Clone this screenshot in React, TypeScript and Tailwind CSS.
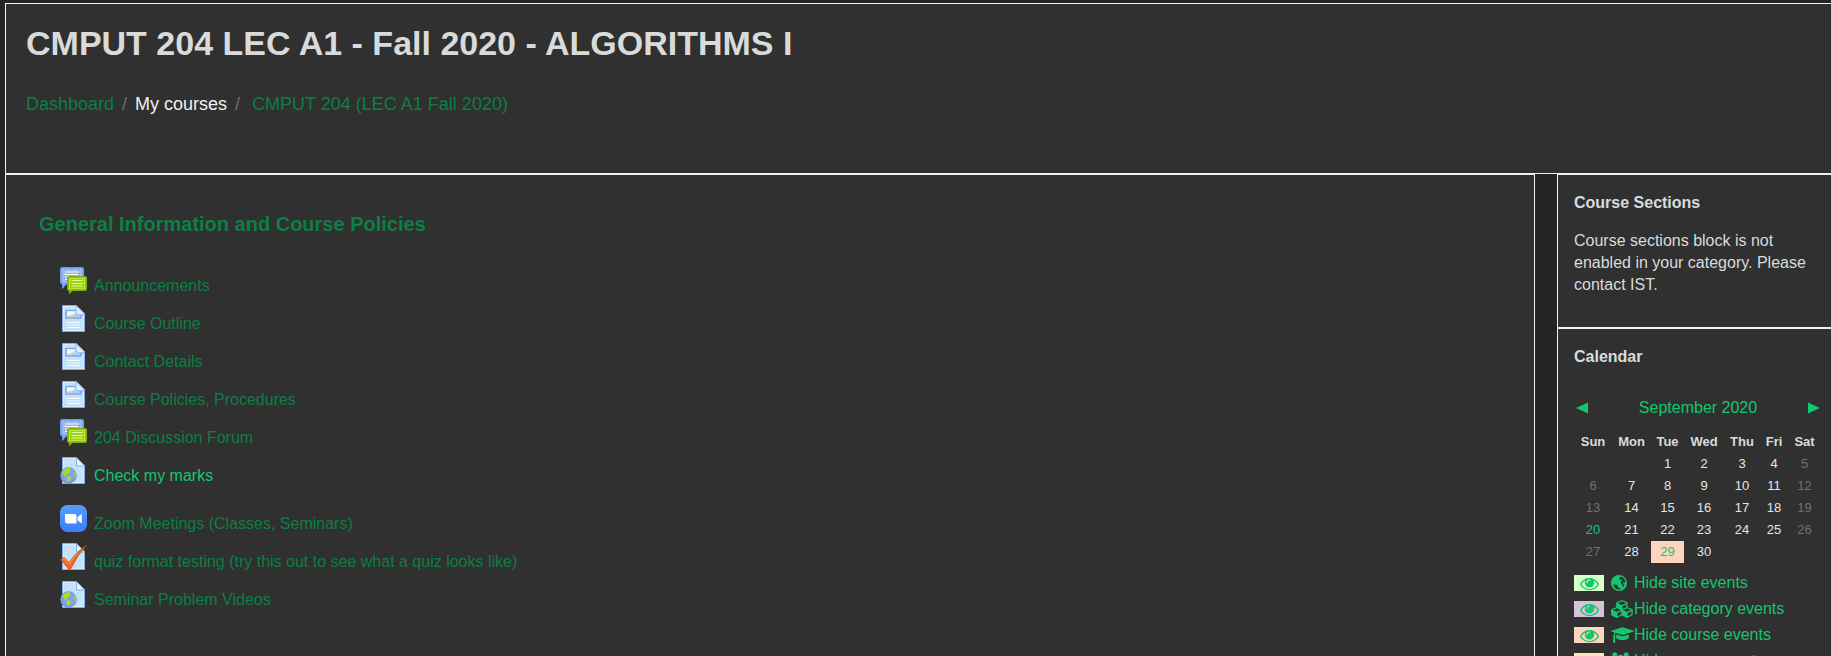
import React from "react";

type IconProps = { className?: string };

const EYE =
  "M1664 960q-152-236-381-353 61 104 61 225 0 185-131.5 316.5t-316.5 131.5-316.5-131.5-131.5-316.5q0-121 61-225-229 117-381 353 133 205 333.5 326.5t434.5 121.5 434.5-121.5 333.5-326.5zm-720-384q0-20-14-34t-34-14q-125 0-214.5 89.5t-89.5 214.5q0 20 14 34t34 14 34-14 14-34q0-86 61-147t147-61q20 0 34-14t14-34zm848 384q0 34-20 69-140 230-376.5 368.5t-499.5 138.5-499.5-139-376.5-368q-20-35-20-69t20-69q140-229 376.5-368t499.5-139 499.5 139 376.5 368q20 35 20 69z";
const CUBES =
  "M640 1632l384-192v-314l-384 164v342zm-64-454l404-173-404-173-404 173zm1088 454l384-192v-314l-384 164v342zm-64-454l404-173-404-173-404 173zm-448-293l384-165v-266l-384 164v267zm-64-379l441-189-441-189-441 189zm1088 518v416q0 36-19 67t-52 47l-448 224q-25 14-57 14t-57-14l-448-224q-5-2-7-4-2 2-7 4l-448 224q-25 14-57 14t-57-14l-448-224q-33-16-52-47t-19-67v-416q0-38 21.5-70t56.5-48l434-186v-400q0-38 21.5-70t56.5-48l448-192q23-10 50-10t50 10l448 192q35 16 56.5 48t21.5 70v400l434 186q36 16 57 48t21 70z";
const CAP =
  "M1774 836l18 316q4 69-82 128t-235 93.5-323 34.5-323-34.5-235-93.5-82-128l18-316 574 181q22 7 48 7t48-7zm530-324q0 23-22 31l-1120 352q-4 1-10 1t-10-1l-652-206q-43 34-71 111.5t-34 178.5q63 36 63 109 0 69-58 107l58 433q2 14-8 25-9 11-24 11h-192q-15 0-24-11-10-11-8-25l58-433q-58-38-58-107 0-73 65-111 11-207 98-330l-333-104q-22-8-22-31t22-31l1120-352q4-1 10-1t10 1l1120 352q22 8 22 31z";
const GROUP =
  "M593 896q-162 5-265 128h-134q-82 0-138-40.5t-56-118.5q0-353 124-353 6 0 43.5 21t97.5 42.5 119 21.5q67 0 133-23-5 37-5 66 0 159 81 287zm1071 637q0 120-73 189.5t-194 69.5h-874q-121 0-194-69.5t-73-189.5q0-53 3.5-103.5t14-109 26.5-108.5 43-97.5 62-81 85.5-53.5 111.5-20q10 0 43 21.5t73 48 107 48 135 21.5 135-21.5 107-48 73-48 43-21.5q61 0 111.5 20t85.5 53.5 62 81 43 97.5 26.5 108.5 14 109 3.5 103.5zm-1024-1277q0 106-75 181t-181 75-181-75-75-181 75-181 181-75 181 75 75 181zm704 384q0 159-112.5 271.5t-271.5 112.5-271.5-112.5-112.5-271.5 112.5-271.5 271.5-112.5 271.5 112.5 112.5 271.5zm576 225q0 78-56 118.5t-138 40.5h-134q-103-123-265-128 81-128 81-287 0-29-5-66 66 23 133 23 59 0 119-21.5t97.5-42.5 43.5-21q124 0 124 353zm-128-609q0 106-75 181t-181 75-181-75-75-181 75-181 181-75 181 75 75 181z";

function EyeIcon() {
  return (
    <svg viewBox="0 0 1792 1792" className="size-[19px]" fill="currentColor" aria-hidden="true">
      <path d={EYE} />
    </svg>
  );
}

function GlobeIcon() {
  return (
    <svg viewBox="0 0 16 16" className="size-4" aria-hidden="true">
      <circle cx="8" cy="8" r="8" fill="currentColor" />
      <path d="M8.600 2 10.200 1.700 12 2.700 13.600 4.200 14.500 6.500 14.400 8 13.200 7.200 12 8 12.300 9.500 13.300 10 12.500 11.800 11.600 12 11.400 10.200 10.200 8.800 9.800 7 10.500 5.800 11.700 5.400 11 4.600 9.600 5 8.400 3.700z" fill="#303030" />
      <path d="M2.200 8.800 4 9.800 5.800 10 7 11 6.800 12 8 12.900 9.600 12.900 10 13.900 8.300 14.500 5.500 14 3.400 12.300z" fill="#303030" />
    </svg>
  );
}

function WideIcon({ d, viewBox, className }: { d: string; viewBox: string; className: string }) {
  return (
    <svg viewBox={viewBox} className={className} fill="currentColor" aria-hidden="true">
      <path d={d} />
    </svg>
  );
}

function ForumIcon({ className }: IconProps) {
  return (
    <svg viewBox="0 0 27 27" className={className} aria-hidden="true">
      <path d="M2 .5h20q1.500 0 1.500 1.500v14q0 1-1.500 1H6l-3.500 4.500V17Q.5 17 .5 15.500V2Q.5.5 2 .5z" fill="#80a8ee" stroke="#7099e4" />
      <rect x="3" y="3" width="18" height="11.500" fill="#8fb3f2" stroke="#a9c6f8" />
      <path d="M5 5h14M4 7.500h14M5 10h8M5 12.500h3" stroke="#fff" strokeWidth="1.100" />
      <path d="M8.500 9.500h16.500q1.500 0 1.500 1.500v11q0 1.500-1.500 1.500H12l-2.500 3V23.500H8.500Q7.500 23.500 7.500 22V11q0-1.500 1-1.500z" fill="#8fc400" stroke="#7fae08" />
      <rect x="9.500" y="11.500" width="15" height="10" fill="#9ed312" stroke="#b9e63a" />
      <path d="M11.500 13.500h11M11.500 16.500h11M11.500 19h11" stroke="#e6fab0" strokeWidth="1.100" />
    </svg>
  );
}

function Sheet() {
  return (
    <>
      <path d="M2.500.5h14l8 8v18h-22z" fill="#c4e2f9" stroke="#86a9e8" />
      <path d="M3.500 1.500h12.500v7.500h7.500v16.500h-20z" fill="none" stroke="#ddeefc" strokeWidth=".8" />
      <path d="M16.500.5v8.500h8z" fill="#e9f4ff" stroke="#86a9e8" />
    </>
  );
}

function PageIcon({ className }: IconProps) {
  return (
    <svg viewBox="0 0 27 27" className={className} aria-hidden="true">
      <Sheet />
      <rect x="6" y="5.500" width="15" height="7.500" fill="#a9d4fa" stroke="#7ba3e2" strokeWidth="1.400" />
      <path d="M7 6.300h9l-2.500 3.200L7 11z" fill="#effaff" />
      <path d="M7 12.200V11l4-.5 2 1.700z" fill="#f1cf98" />
      <path d="M16 .8v7l2 2h6V8.500z" fill="#e3effd" stroke="#86a9e8" strokeWidth=".8" />
      <path d="M7 17.500h13M7 20h13M7 22.500h13" stroke="#fff" strokeWidth="1.200" />
      <path d="M7 18.700h13M7 21.200h13" stroke="#b4d6f5" strokeWidth=".6" />
    </svg>
  );
}

function LinkIcon({ className }: IconProps) {
  return (
    <svg viewBox="0 0 27 27" className={className} aria-hidden="true">
      <Sheet />
      <circle cx="8.500" cy="18.500" r="8.300" fill="#6f97dc" />
      <circle cx="9" cy="18.200" r="6.800" fill="#80a6e8" />
      <path d="M2 15.500 4.500 12.500 8 11l3 .8-1.500 1.700 1.300 1-2.300 1.500-1.500 1.700-1.500-.2 1 1.500-1.500.2-1.500-2z" fill="#aedc20" />
      <path d="M7 19.300 10.500 20l.8 1.500-1.800 1.700-1.200 2.300-1.300-2z" fill="#aedc20" />
      <path d="M14.500 14.500l1.300 2.500v3l-1.300-1-.6-2.500z" fill="#aedc20" />
    </svg>
  );
}

function QuizIcon({ className }: IconProps) {
  return (
    <svg viewBox="0 0 27 27" className={className} overflow="visible" aria-hidden="true">
      <Sheet />
      <path d="M.8 16.500 4 14.500 9.300 19.500Q15.500 9.500 26 2.700 17.500 12 10.800 25.800L8.800 26.300z" fill="#ee6a1e" stroke="#c9500f" strokeWidth=".8" />
      <path d="M3 16.500 4.200 15.700 9.300 21Q13 15 18 10" fill="none" stroke="#ffa160" strokeWidth=".9" />
    </svg>
  );
}

function ZoomIcon({ className }: IconProps) {
  return (
    <svg viewBox="0 0 27 27" className={className} aria-hidden="true">
      <defs>
        <linearGradient id="zoomBlue" x1="0" y1="0" x2="0" y2="1">
          <stop offset="0" stopColor="#549dff" />
          <stop offset="1" stopColor="#3a7ff8" />
        </linearGradient>
      </defs>
      <rect width="27" height="27" rx="7.500" fill="url(#zoomBlue)" />
      <path d="M5 9h9.500q2 0 2 2v7.500H7.500Q5 18.500 5 16zM17.500 12l4.300-3.300v9.800L17.500 15.500z" fill="#fff" />
    </svg>
  );
}

const activities = [
  [
    { label: "Announcements", Icon: ForumIcon },
    { label: "Course Outline", Icon: PageIcon },
    { label: "Contact Details", Icon: PageIcon },
    { label: "Course Policies, Procedures", Icon: PageIcon },
    { label: "204 Discussion Forum", Icon: ForumIcon },
    { label: "Check my marks", Icon: LinkIcon, bright: true },
  ],
  [
    { label: "Zoom Meetings (Classes, Seminars)", Icon: ZoomIcon },
    { label: "quiz format testing (try this out to see what a quiz looks like)", Icon: QuizIcon },
    { label: "Seminar Problem Videos", Icon: LinkIcon },
  ],
];

const weekdays = [
  { name: "Sun", width: "w-[38px]" },
  { name: "Mon", width: "w-[39px]" },
  { name: "Tue", width: "w-[33px]" },
  { name: "Wed", width: "w-[40px]" },
  { name: "Thu", width: "w-[36px]" },
  { name: "Fri", width: "w-[28px]" },
  { name: "Sat", width: "w-[33px]" },
];

const weeks: (number | null)[][] = [
  [null, null, 1, 2, 3, 4, 5],
  [6, 7, 8, 9, 10, 11, 12],
  [13, 14, 15, 16, 17, 18, 19],
  [20, 21, 22, 23, 24, 25, 26],
  [27, 28, 29, 30, null, null, null],
];

function dayClass(day: number | null, column: number) {
  if (day === 29) return "bg-[#ffd3bd] p-0 text-[#11c76f]";
  if (day === 20) return "p-0 text-[#11c76f]";
  return column === 0 || column === 6 ? "p-0 text-[#6a7076]" : "p-0 text-[#e6e6e6]";
}

const filters = [
  { label: "Hide site events", swatch: "bg-[#d8ffc9]", icon: <GlobeIcon /> },
  {
    label: "Hide category events",
    swatch: "bg-[#dac0da]",
    icon: <WideIcon d={CUBES} viewBox="0 0 2304 1792" className="h-[18px] w-[23px]" />,
  },
  {
    label: "Hide course events",
    swatch: "bg-[#ffd3bd]",
    icon: <WideIcon d={CAP} viewBox="0 0 2304 1792" className="h-[18px] w-[23px]" />,
  },
  {
    label: "Hide group events",
    swatch: "bg-[#fee7ae]",
    icon: <WideIcon d={GROUP} viewBox="0 0 1920 1792" className="h-[18px] w-[19px]" />,
  },
];

export default function App() {
  return (
    <div className="flex h-screen flex-col overflow-hidden bg-[#242424] pt-[3px] pl-[5px] font-['Liberation_Sans',Arial,sans-serif] text-base leading-[22px] text-[#d9dbdb]">
      <header className="shrink-0 border-y border-l border-[#eef0f0] bg-[#303030] px-5 pt-[18px] pb-14">
        <h1 className="text-[34px] leading-[42px] font-bold">CMPUT 204 LEC A1 - Fall 2020 - ALGORITHMS I</h1>
        <nav aria-label="Breadcrumb" className="mt-7">
          <ol className="flex text-lg leading-[25px]">
            <li>
              <a href="#dashboard" className="text-[#0b7f45]">Dashboard</a>
            </li>
            <li className="flex">
              <span className="px-2 text-[#6a7076]">/</span>
              <span className="text-[#f0f0f0]">My courses</span>
            </li>
            <li className="flex">
              <span className="pr-3 pl-2 text-[#6a7076]">/</span>
              <a href="#course" className="text-[#0b7f45]">CMPUT 204 (LEC A1 Fall 2020)</a>
            </li>
          </ol>
        </nav>
      </header>

      <div className="flex min-h-0 flex-1 gap-[22px]">
        <main className="min-w-0 flex-1 border-x border-t border-[#eef0f0] bg-[#303030] px-[33px] pt-9">
          <h2 className="text-xl leading-[26px] font-bold">
            <a href="#general" className="text-[#0b7f45]">General Information and Course Policies</a>
          </h2>
          <div className="mt-[30px] flex flex-col gap-[10px] pl-[21px]">
            {activities.map((group, index) => (
              <ul key={index}>
                {group.map(({ label, Icon, bright }: { label: string; Icon: React.FC<IconProps>; bright?: boolean }) => (
                  <li key={label} className="h-[38px]">
                    <a href="#activity" className={bright ? "flex gap-[7px] text-[#11c76f]" : "flex gap-[7px] text-[#0b7f45]"}>
                      <Icon className="size-[27px] shrink-0" />
                      <span className="pt-2">{label}</span>
                    </a>
                  </li>
                ))}
              </ul>
            ))}
          </div>
        </main>

        <aside className="flex w-[274px] shrink-0 flex-col">
          <section className="shrink-0 border-y border-l border-[#eef0f0] bg-[#303030] pt-[17px] pr-[10px] pb-[31px] pl-4">
            <h3 className="font-bold">Course Sections</h3>
            <p className="mt-4">Course sections block is not enabled in your category. Please contact IST.</p>
          </section>
          <section className="flex-1 border-t border-l border-[#eef0f0] bg-[#303030] pt-[17px] pr-[10px] pl-4">
            <h3 className="font-bold">Calendar</h3>
            <div className="mt-[29px] flex items-center justify-between pr-px pl-0.5 text-[#11c76f]">
              <a href="#previous" aria-label="Previous month">
                <svg viewBox="0 0 12 12" className="size-3" fill="currentColor" aria-hidden="true">
                  <path d="M0 6 12 .5v11z" />
                </svg>
              </a>
              <a href="#month">September 2020</a>
              <a href="#next" aria-label="Next month">
                <svg viewBox="0 0 12 12" className="size-3" fill="currentColor" aria-hidden="true">
                  <path d="M12 6 0 .5v11z" />
                </svg>
              </a>
            </div>
            <table className="mt-3 w-full table-fixed border-collapse text-center text-[13px] leading-[22px]">
              <thead>
                <tr>
                  {weekdays.map(({ name, width }) => (
                    <th key={name} scope="col" className={width}>{name}</th>
                  ))}
                </tr>
              </thead>
              <tbody>
                {weeks.map((week, row) => (
                  <tr key={row}>
                    {week.map((day, column) => (
                      <td key={column} className={dayClass(day, column)}>{day}</td>
                    ))}
                  </tr>
                ))}
              </tbody>
            </table>
            <ul className="mt-[9px] flex flex-col gap-1 text-[#11c76f]">
              {filters.map(({ label, swatch, icon }) => (
                <li key={label}>
                  <a href="#filter" className="flex items-center whitespace-nowrap">
                    <span className={`flex h-4 w-[30px] items-center justify-center ${swatch}`}>
                      <EyeIcon />
                    </span>
                    <span className="ml-1.5 flex w-6 pl-px">{icon}</span>
                    {label}
                  </a>
                </li>
              ))}
            </ul>
          </section>
        </aside>
      </div>
    </div>
  );
}
